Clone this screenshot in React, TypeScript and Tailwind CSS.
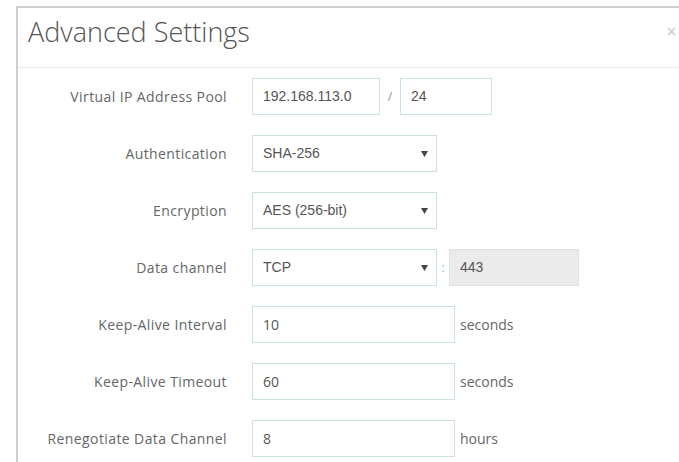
import React from "react";

type Row = {
  label: string;
  content: React.ReactNode;
};

const inputBase =
  "h-[37px] border px-[10px] flex items-center text-[14px] text-[#555]";

function Select({ value, width }: { value: string; width: string }) {
  return (
    <div className={`${inputBase} ${width} border-[#c9e2e5] bg-white justify-between pr-[8px]`}>
      <span className="font-['Liberation_Sans',Arial,sans-serif]">{value}</span>
      <svg width="7" height="6" viewBox="0 0 7 6" className="fill-[#444]">
        <path d="M0 0h7L3.5 6z" />
      </svg>
    </div>
  );
}

function TextInput({
  value,
  width,
  mono = false,
  disabled = false,
}: {
  value: string;
  width: string;
  mono?: boolean;
  disabled?: boolean;
}) {
  return (
    <div
      className={`${inputBase} ${width} ${
        disabled ? "bg-[#ebebeb] border-[#d8e4e5]" : "bg-white border-[#c9e2e5]"
      } ${mono ? "font-['Liberation_Sans',Arial,sans-serif]" : "font-['Open_Sans',sans-serif]"}`}
    >
      {value}
    </div>
  );
}

function Unit({ children }: { children: React.ReactNode }) {
  return <span className="ml-[5px] text-[14px] text-[#666] font-['Open_Sans',sans-serif]">{children}</span>;
}

const rows: Row[] = [
  {
    label: "Virtual IP Address Pool",
    content: (
      <>
        <TextInput value="192.168.113.0" width="w-[128px]" mono />
        <span className="w-[20px] text-center text-[12px] text-[#999]">/</span>
        <TextInput value="24" width="w-[92px]" mono />
      </>
    ),
  },
  { label: "Authentication", content: <Select value="SHA-256" width="w-[185px]" /> },
  { label: "Encryption", content: <Select value="AES (256-bit)" width="w-[185px]" /> },
  {
    label: "Data channel",
    content: (
      <>
        <Select value="TCP" width="w-[185px]" />
        <span className="w-[12px] text-center text-[12px] text-[#9cc]">:</span>
        <TextInput value="443" width="w-[130px]" mono disabled />
      </>
    ),
  },
  {
    label: "Keep-Alive Interval",
    content: (
      <>
        <TextInput value="10" width="w-[203px]" />
        <Unit>seconds</Unit>
      </>
    ),
  },
  {
    label: "Keep-Alive Timeout",
    content: (
      <>
        <TextInput value="60" width="w-[203px]" />
        <Unit>seconds</Unit>
      </>
    ),
  },
  {
    label: "Renegotiate Data Channel",
    content: (
      <>
        <TextInput value="8" width="w-[203px]" />
        <Unit>hours</Unit>
      </>
    ),
  },
];

export default function App() {
  return (
    <div className="w-[679px] h-[462px] overflow-hidden bg-white">
      <div className="ml-[16px] mt-[6px] w-[700px] h-[500px] border-2 border-[#cfcfcf] bg-white">
        <div className="h-[60px] border-b border-[#e8e8e8] flex items-start justify-between pl-[10px] pt-[8px]">
          <h2 className="text-[27px] leading-[32px] font-light text-[#555] font-['Open_Sans',sans-serif]">
            Advanced Settings
          </h2>
          <span className="mr-[38px] mt-[4px] text-[16px] font-bold text-[#d4d4d4] font-['Liberation_Sans',sans-serif]">
            ×
          </span>
        </div>
        <div className="pt-[10px] flex flex-col gap-[20px]">
          {rows.map((r) => (
            <div key={r.label} className="flex items-center">
              <div className="w-[209px] text-right text-[14px] tracking-[0.4px] text-[#666] font-['Open_Sans',sans-serif]">
                {r.label}
              </div>
              <div className="ml-[25px] flex items-center">{r.content}</div>
            </div>
          ))}
        </div>
      </div>
    </div>
  );
}
